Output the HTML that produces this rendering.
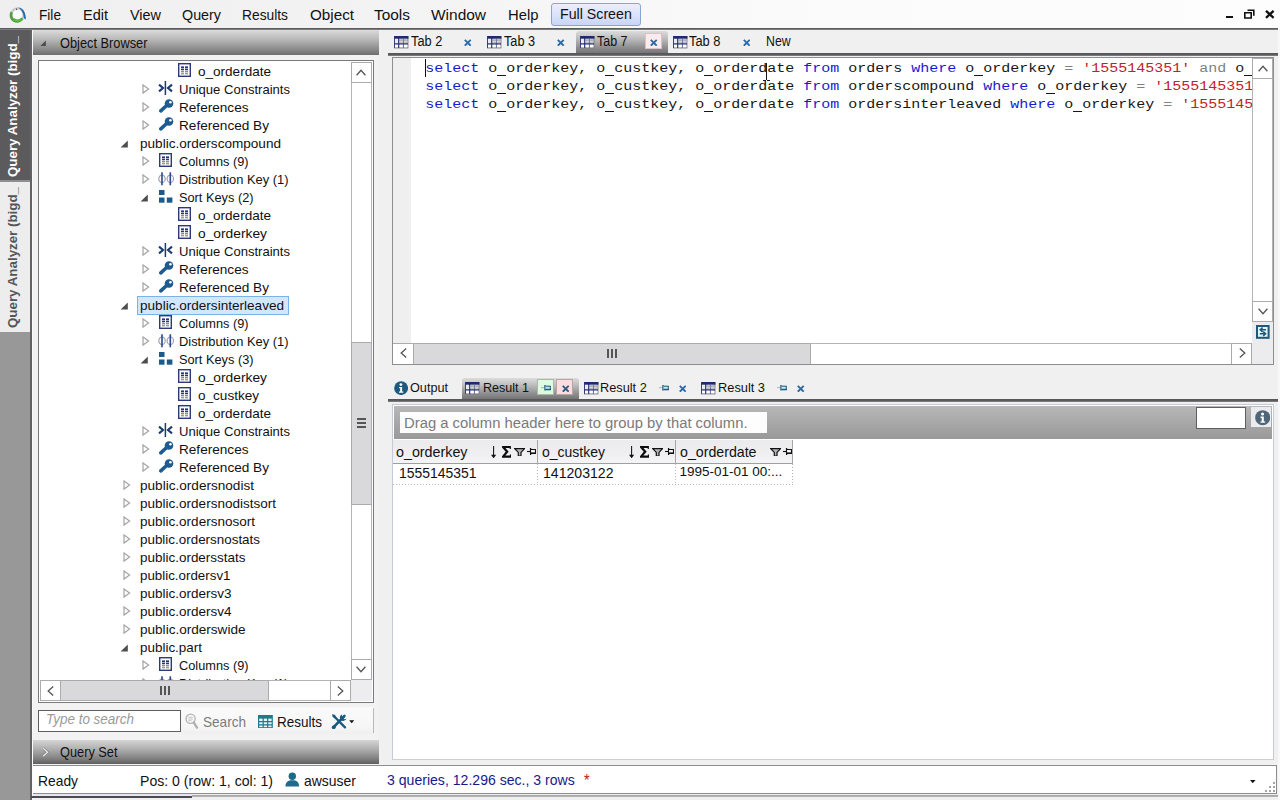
<!DOCTYPE html>
<html><head><meta charset="utf-8"><title>Query Analyzer</title>
<style>
html,body{margin:0;padding:0;}
body{width:1280px;height:800px;overflow:hidden;background:#f0f0f0;position:relative;font-family:'Liberation Sans',sans-serif;}
#r{position:absolute;left:0;top:0;width:1280px;height:800px;overflow:hidden;}
#r div,#r span,#r svg{position:absolute;display:block;box-sizing:border-box;}
#r .clip{overflow:hidden;}
</style></head><body><div id="r">
<div style="left:0px;top:0px;width:1280px;height:800px;background:#f0f0f0;"></div>
<div style="left:0px;top:0px;width:1280px;height:28px;background:linear-gradient(90deg,#f0eff0 0%,#f3f3f4 30%,#f9f9f9 55%,#fcfcfc 75%,#fdfdfd 100%);"></div>
<div style="left:0px;top:28px;width:1278px;height:1px;background:#5c5b5d;"></div>
<div style="left:0px;top:29px;width:1278px;height:1px;background:#7c7b7d;"></div>
<span style="left:38.60px;top:7.20px;font:15px/15px 'Liberation Sans',sans-serif;color:#111;white-space:pre;transform:scaleX(0.9102);transform-origin:0 0;">File</span>
<span style="left:83.00px;top:7.20px;font:15px/15px 'Liberation Sans',sans-serif;color:#111;white-space:pre;transform:scaleX(0.9672);transform-origin:0 0;">Edit</span>
<span style="left:129.50px;top:7.20px;font:15px/15px 'Liberation Sans',sans-serif;color:#111;white-space:pre;transform:scaleX(0.9615);transform-origin:0 0;">View</span>
<span style="left:182.00px;top:7.20px;font:15px/15px 'Liberation Sans',sans-serif;color:#111;white-space:pre;transform:scaleX(0.9548);transform-origin:0 0;">Query</span>
<span style="left:242.00px;top:7.20px;font:15px/15px 'Liberation Sans',sans-serif;color:#111;white-space:pre;transform:scaleX(0.9197);transform-origin:0 0;">Results</span>
<span style="left:309.50px;top:7.20px;font:15px/15px 'Liberation Sans',sans-serif;color:#111;white-space:pre;transform:scaleX(1.0149);transform-origin:0 0;">Object</span>
<span style="left:373.50px;top:7.20px;font:15px/15px 'Liberation Sans',sans-serif;color:#111;white-space:pre;transform:scaleX(1.0281);transform-origin:0 0;">Tools</span>
<span style="left:430.50px;top:7.20px;font:15px/15px 'Liberation Sans',sans-serif;color:#111;white-space:pre;transform:scaleX(1.0309);transform-origin:0 0;">Window</span>
<span style="left:507.50px;top:7.20px;font:15px/15px 'Liberation Sans',sans-serif;color:#111;white-space:pre;transform:scaleX(0.9887);transform-origin:0 0;">Help</span>
<div style="left:551px;top:3px;width:90px;height:23px;background:linear-gradient(#e9effc 0%,#dbe3fa 50%,#c9d5f7 100%);border:1px solid #86a6da;border-radius:3px;"></div>
<span style="left:560.30px;top:6.20px;font:15px/15px 'Liberation Sans',sans-serif;color:#111;white-space:pre;transform:scaleX(0.9464);transform-origin:0 0;">Full Screen</span>
<div style="left:1226px;top:16px;width:7px;height:2px;background:#111;"></div>
<svg style="left:1244px;top:9px;" width="11" height="10" viewBox="0 0 11 10"><path d="M3.5 1.2h6.3v5.6M0.8 3.8h6.4v5.2h-6.4z" fill="none" stroke="#111" stroke-width="1.6"/></svg>
<svg style="left:1265px;top:10px;" width="10" height="9" viewBox="0 0 10 9"><path d="M1 0.8l7.6 7M8.6 0.8l-7.6 7" stroke="#111" stroke-width="2.3" fill="none"/></svg>
<div style="left:0px;top:30px;width:30px;height:770px;background:#999899;"></div>
<div style="left:0px;top:30px;width:30px;height:150px;background:#5b5a5c;"></div>
<div style="left:0px;top:180px;width:30px;height:2px;background:#8f8e90;"></div>
<div style="left:0px;top:182px;width:30px;height:150px;background:#eeedee;"></div>
<div style="left:30px;top:30px;width:2px;height:770px;background:#636264;"></div>
<div style="left:32px;top:30px;width:1px;height:770px;background:#fbfbfd;"></div>
<span style="left:5.4px;top:177px;font:bold 13.5px/16px 'Liberation Sans',sans-serif;color:#fff;white-space:pre;transform-origin:0 0;transform:rotate(-90deg) scaleX(0.9875);">Query Analyzer (bigd_</span>
<span style="left:5.4px;top:328px;font:bold 13.5px/16px 'Liberation Sans',sans-serif;color:#555;white-space:pre;transform-origin:0 0;transform:rotate(-90deg) scaleX(0.9875);">Query Analyzer (bigd_</span>
<div style="left:33px;top:30px;width:346px;height:25px;background:linear-gradient(#dcdbdc 0%,#bcbbbc 35%,#8e8d8e 75%,#6f6e6f 100%);"></div>
<svg style="left:40.4px;top:40.2px;" width="7" height="7" viewBox="0 0 7 7"><path d="M5.8 0.6V5.9H0.5z" fill="#4a494b"/></svg>
<span style="left:59.50px;top:35.75px;font:14px/14px 'Liberation Sans',sans-serif;color:#111;white-space:pre;transform:scaleX(0.9143);transform-origin:0 0;">Object Browser</span>
<div style="left:33px;top:55px;width:346px;height:685px;background:#f3f2f3;"></div>
<div style="left:38px;top:60px;width:336px;height:643px;background:#fff;border:1px solid #7a7a7a;"></div>
<div class="clip" style="left:39px;top:61px;width:312px;height:619px;">
<svg style="left:139.3px;top:2.0999999999999996px;" width="13" height="14" viewBox="0 0 13 14"><rect x="0.7" y="0.7" width="11.6" height="12.6" fill="#fff" stroke="#2b3a7a" stroke-width="1.4"/><rect x="3" y="3.4" width="3" height="1.6" fill="#233478"/><rect x="7" y="3.4" width="3" height="1.6" fill="#233478"/><rect x="3" y="5.6" width="3" height="1.6" fill="#233478"/><rect x="7" y="5.6" width="3" height="1.6" fill="#233478"/><rect x="3" y="7.8" width="3" height="1.6" fill="#8a8a8a"/><rect x="7" y="7.8" width="3" height="1.6" fill="#8a8a8a"/><rect x="3" y="10" width="3" height="1.4" fill="#9a9a9a"/><rect x="7" y="10" width="3" height="1.4" fill="#9a9a9a"/></svg>
<span style="left:158.70px;top:3.70px;font:13px/13px 'Liberation Sans',sans-serif;color:#111;white-space:pre;transform:scaleX(1.0412);transform-origin:0 0;">o_orderdate</span>
<svg style="left:103.1px;top:23px;" width="8" height="10" viewBox="0 0 8 10"><path d="M1 0.9L6.6 5L1 9.1z" fill="#fff" stroke="#a3a3a3" stroke-width="1.2"/></svg>
<svg style="left:119.1px;top:19.8px;" width="15" height="14" viewBox="0 0 15 14"><path d="M7.4 0v14" stroke="#1f3a6e" stroke-width="1.5"/><path d="M1 3.6l4 3.4l-4 3.4M14 3.6l-4 3.4l4 3.4" fill="none" stroke="#1f3a6e" stroke-width="2.1"/></svg>
<span style="left:139.60px;top:21.70px;font:13px/13px 'Liberation Sans',sans-serif;color:#111;white-space:pre;transform:scaleX(1.0040);transform-origin:0 0;">Unique Constraints</span>
<svg style="left:103.1px;top:41px;" width="8" height="10" viewBox="0 0 8 10"><path d="M1 0.9L6.6 5L1 9.1z" fill="#fff" stroke="#a3a3a3" stroke-width="1.2"/></svg>
<svg style="left:119.8px;top:38.3px;" width="15" height="14" viewBox="0 0 15 14"><path d="M1.8 11.9L8.2 6" stroke="#1f5b8e" stroke-width="3.5" stroke-linecap="round"/><circle cx="10" cy="4.5" r="4.3" fill="#1f5b8e"/><circle cx="11.4" cy="3.3" r="1.3" fill="#fff"/></svg>
<span style="left:139.60px;top:39.70px;font:13px/13px 'Liberation Sans',sans-serif;color:#111;white-space:pre;transform:scaleX(1.0454);transform-origin:0 0;">References</span>
<svg style="left:103.1px;top:59px;" width="8" height="10" viewBox="0 0 8 10"><path d="M1 0.9L6.6 5L1 9.1z" fill="#fff" stroke="#a3a3a3" stroke-width="1.2"/></svg>
<svg style="left:119.8px;top:56.3px;" width="15" height="14" viewBox="0 0 15 14"><path d="M1.8 11.9L8.2 6" stroke="#1f5b8e" stroke-width="3.5" stroke-linecap="round"/><circle cx="10" cy="4.5" r="4.3" fill="#1f5b8e"/><circle cx="11.4" cy="3.3" r="1.3" fill="#fff"/></svg>
<span style="left:139.60px;top:57.70px;font:13px/13px 'Liberation Sans',sans-serif;color:#111;white-space:pre;transform:scaleX(1.0466);transform-origin:0 0;">Referenced By</span>
<svg style="left:81.4px;top:79px;" width="9" height="8" viewBox="0 0 9 8"><path d="M7.8 0.4V7.4H0.6z" fill="#4e4d4f"/></svg>
<span style="left:100.60px;top:75.70px;font:13px/13px 'Liberation Sans',sans-serif;color:#111;white-space:pre;transform:scaleX(1.0434);transform-origin:0 0;">public.orderscompound</span>
<svg style="left:103.1px;top:95px;" width="8" height="10" viewBox="0 0 8 10"><path d="M1 0.9L6.6 5L1 9.1z" fill="#fff" stroke="#a3a3a3" stroke-width="1.2"/></svg>
<svg style="left:120.2px;top:92.1px;" width="13" height="14" viewBox="0 0 13 14"><rect x="0.7" y="0.7" width="11.6" height="12.6" fill="#fff" stroke="#2b3a7a" stroke-width="1.4"/><rect x="3" y="3.4" width="3" height="1.6" fill="#233478"/><rect x="7" y="3.4" width="3" height="1.6" fill="#233478"/><rect x="3" y="5.6" width="3" height="1.6" fill="#233478"/><rect x="7" y="5.6" width="3" height="1.6" fill="#233478"/><rect x="3" y="7.8" width="3" height="1.6" fill="#8a8a8a"/><rect x="7" y="7.8" width="3" height="1.6" fill="#8a8a8a"/><rect x="3" y="10" width="3" height="1.4" fill="#9a9a9a"/><rect x="7" y="10" width="3" height="1.4" fill="#9a9a9a"/></svg>
<span style="left:139.60px;top:93.70px;font:13px/13px 'Liberation Sans',sans-serif;color:#111;white-space:pre;transform:scaleX(0.9817);transform-origin:0 0;">Columns (9)</span>
<svg style="left:103.1px;top:113px;" width="8" height="10" viewBox="0 0 8 10"><path d="M1 0.9L6.6 5L1 9.1z" fill="#fff" stroke="#a3a3a3" stroke-width="1.2"/></svg>
<svg style="left:119px;top:110.8px;" width="16" height="14" viewBox="0 0 16 14"><ellipse cx="4" cy="6.8" rx="3.2" ry="3.8" fill="none" stroke="#9aa3bb" stroke-width="1.2"/><ellipse cx="12.3" cy="6.8" rx="3.2" ry="3.8" fill="none" stroke="#9aa3bb" stroke-width="1.2"/><path d="M4 0.3v13M12.3 0.3v13" stroke="#2a4a8a" stroke-width="1.6"/></svg>
<span style="left:139.60px;top:111.70px;font:13px/13px 'Liberation Sans',sans-serif;color:#111;white-space:pre;transform:scaleX(0.9906);transform-origin:0 0;">Distribution Key (1)</span>
<svg style="left:100.8px;top:133px;" width="9" height="8" viewBox="0 0 9 8"><path d="M7.8 0.4V7.4H0.6z" fill="#4e4d4f"/></svg>
<svg style="left:120.2px;top:129px;" width="14" height="13" viewBox="0 0 14 13"><rect x="0" y="0" width="5.5" height="5" fill="#1a5a8c"/><rect x="0" y="7.5" width="5.5" height="5.2" fill="#1a5a8c"/><rect x="7.8" y="7.5" width="5.6" height="5.2" fill="#1a5a8c"/></svg>
<span style="left:139.60px;top:129.70px;font:13px/13px 'Liberation Sans',sans-serif;color:#111;white-space:pre;transform:scaleX(0.9821);transform-origin:0 0;">Sort Keys (2)</span>
<svg style="left:139.3px;top:146.1px;" width="13" height="14" viewBox="0 0 13 14"><rect x="0.7" y="0.7" width="11.6" height="12.6" fill="#fff" stroke="#2b3a7a" stroke-width="1.4"/><rect x="3" y="3.4" width="3" height="1.6" fill="#233478"/><rect x="7" y="3.4" width="3" height="1.6" fill="#233478"/><rect x="3" y="5.6" width="3" height="1.6" fill="#233478"/><rect x="7" y="5.6" width="3" height="1.6" fill="#233478"/><rect x="3" y="7.8" width="3" height="1.6" fill="#8a8a8a"/><rect x="7" y="7.8" width="3" height="1.6" fill="#8a8a8a"/><rect x="3" y="10" width="3" height="1.4" fill="#9a9a9a"/><rect x="7" y="10" width="3" height="1.4" fill="#9a9a9a"/></svg>
<span style="left:158.70px;top:147.70px;font:13px/13px 'Liberation Sans',sans-serif;color:#111;white-space:pre;transform:scaleX(1.0412);transform-origin:0 0;">o_orderdate</span>
<svg style="left:139.3px;top:164.1px;" width="13" height="14" viewBox="0 0 13 14"><rect x="0.7" y="0.7" width="11.6" height="12.6" fill="#fff" stroke="#2b3a7a" stroke-width="1.4"/><rect x="3" y="3.4" width="3" height="1.6" fill="#233478"/><rect x="7" y="3.4" width="3" height="1.6" fill="#233478"/><rect x="3" y="5.6" width="3" height="1.6" fill="#233478"/><rect x="7" y="5.6" width="3" height="1.6" fill="#233478"/><rect x="3" y="7.8" width="3" height="1.6" fill="#8a8a8a"/><rect x="7" y="7.8" width="3" height="1.6" fill="#8a8a8a"/><rect x="3" y="10" width="3" height="1.4" fill="#9a9a9a"/><rect x="7" y="10" width="3" height="1.4" fill="#9a9a9a"/></svg>
<span style="left:158.70px;top:165.70px;font:13px/13px 'Liberation Sans',sans-serif;color:#111;white-space:pre;transform:scaleX(1.0609);transform-origin:0 0;">o_orderkey</span>
<svg style="left:103.1px;top:185px;" width="8" height="10" viewBox="0 0 8 10"><path d="M1 0.9L6.6 5L1 9.1z" fill="#fff" stroke="#a3a3a3" stroke-width="1.2"/></svg>
<svg style="left:119.1px;top:181.8px;" width="15" height="14" viewBox="0 0 15 14"><path d="M7.4 0v14" stroke="#1f3a6e" stroke-width="1.5"/><path d="M1 3.6l4 3.4l-4 3.4M14 3.6l-4 3.4l4 3.4" fill="none" stroke="#1f3a6e" stroke-width="2.1"/></svg>
<span style="left:139.60px;top:183.70px;font:13px/13px 'Liberation Sans',sans-serif;color:#111;white-space:pre;transform:scaleX(1.0040);transform-origin:0 0;">Unique Constraints</span>
<svg style="left:103.1px;top:203px;" width="8" height="10" viewBox="0 0 8 10"><path d="M1 0.9L6.6 5L1 9.1z" fill="#fff" stroke="#a3a3a3" stroke-width="1.2"/></svg>
<svg style="left:119.8px;top:200.3px;" width="15" height="14" viewBox="0 0 15 14"><path d="M1.8 11.9L8.2 6" stroke="#1f5b8e" stroke-width="3.5" stroke-linecap="round"/><circle cx="10" cy="4.5" r="4.3" fill="#1f5b8e"/><circle cx="11.4" cy="3.3" r="1.3" fill="#fff"/></svg>
<span style="left:139.60px;top:201.70px;font:13px/13px 'Liberation Sans',sans-serif;color:#111;white-space:pre;transform:scaleX(1.0454);transform-origin:0 0;">References</span>
<svg style="left:103.1px;top:221px;" width="8" height="10" viewBox="0 0 8 10"><path d="M1 0.9L6.6 5L1 9.1z" fill="#fff" stroke="#a3a3a3" stroke-width="1.2"/></svg>
<svg style="left:119.8px;top:218.3px;" width="15" height="14" viewBox="0 0 15 14"><path d="M1.8 11.9L8.2 6" stroke="#1f5b8e" stroke-width="3.5" stroke-linecap="round"/><circle cx="10" cy="4.5" r="4.3" fill="#1f5b8e"/><circle cx="11.4" cy="3.3" r="1.3" fill="#fff"/></svg>
<span style="left:139.60px;top:219.70px;font:13px/13px 'Liberation Sans',sans-serif;color:#111;white-space:pre;transform:scaleX(1.0466);transform-origin:0 0;">Referenced By</span>
<div style="left:98px;top:235px;width:152px;height:19px;background:#d1e8fc;border:1px solid #7ab3ea;"></div>
<svg style="left:81.4px;top:241px;" width="9" height="8" viewBox="0 0 9 8"><path d="M7.8 0.4V7.4H0.6z" fill="#4e4d4f"/></svg>
<span style="left:100.60px;top:237.70px;font:13px/13px 'Liberation Sans',sans-serif;color:#111;white-space:pre;transform:scaleX(1.0433);transform-origin:0 0;">public.ordersinterleaved</span>
<svg style="left:103.1px;top:257px;" width="8" height="10" viewBox="0 0 8 10"><path d="M1 0.9L6.6 5L1 9.1z" fill="#fff" stroke="#a3a3a3" stroke-width="1.2"/></svg>
<svg style="left:120.2px;top:254.1px;" width="13" height="14" viewBox="0 0 13 14"><rect x="0.7" y="0.7" width="11.6" height="12.6" fill="#fff" stroke="#2b3a7a" stroke-width="1.4"/><rect x="3" y="3.4" width="3" height="1.6" fill="#233478"/><rect x="7" y="3.4" width="3" height="1.6" fill="#233478"/><rect x="3" y="5.6" width="3" height="1.6" fill="#233478"/><rect x="7" y="5.6" width="3" height="1.6" fill="#233478"/><rect x="3" y="7.8" width="3" height="1.6" fill="#8a8a8a"/><rect x="7" y="7.8" width="3" height="1.6" fill="#8a8a8a"/><rect x="3" y="10" width="3" height="1.4" fill="#9a9a9a"/><rect x="7" y="10" width="3" height="1.4" fill="#9a9a9a"/></svg>
<span style="left:139.60px;top:255.70px;font:13px/13px 'Liberation Sans',sans-serif;color:#111;white-space:pre;transform:scaleX(0.9817);transform-origin:0 0;">Columns (9)</span>
<svg style="left:103.1px;top:275px;" width="8" height="10" viewBox="0 0 8 10"><path d="M1 0.9L6.6 5L1 9.1z" fill="#fff" stroke="#a3a3a3" stroke-width="1.2"/></svg>
<svg style="left:119px;top:272.8px;" width="16" height="14" viewBox="0 0 16 14"><ellipse cx="4" cy="6.8" rx="3.2" ry="3.8" fill="none" stroke="#9aa3bb" stroke-width="1.2"/><ellipse cx="12.3" cy="6.8" rx="3.2" ry="3.8" fill="none" stroke="#9aa3bb" stroke-width="1.2"/><path d="M4 0.3v13M12.3 0.3v13" stroke="#2a4a8a" stroke-width="1.6"/></svg>
<span style="left:139.60px;top:273.70px;font:13px/13px 'Liberation Sans',sans-serif;color:#111;white-space:pre;transform:scaleX(0.9906);transform-origin:0 0;">Distribution Key (1)</span>
<svg style="left:100.8px;top:295px;" width="9" height="8" viewBox="0 0 9 8"><path d="M7.8 0.4V7.4H0.6z" fill="#4e4d4f"/></svg>
<svg style="left:120.2px;top:291px;" width="14" height="13" viewBox="0 0 14 13"><rect x="0" y="0" width="5.5" height="5" fill="#1a5a8c"/><rect x="0" y="7.5" width="5.5" height="5.2" fill="#1a5a8c"/><rect x="7.8" y="7.5" width="5.6" height="5.2" fill="#1a5a8c"/></svg>
<span style="left:139.60px;top:291.70px;font:13px/13px 'Liberation Sans',sans-serif;color:#111;white-space:pre;transform:scaleX(0.9821);transform-origin:0 0;">Sort Keys (3)</span>
<svg style="left:139.3px;top:308.1px;" width="13" height="14" viewBox="0 0 13 14"><rect x="0.7" y="0.7" width="11.6" height="12.6" fill="#fff" stroke="#2b3a7a" stroke-width="1.4"/><rect x="3" y="3.4" width="3" height="1.6" fill="#233478"/><rect x="7" y="3.4" width="3" height="1.6" fill="#233478"/><rect x="3" y="5.6" width="3" height="1.6" fill="#233478"/><rect x="7" y="5.6" width="3" height="1.6" fill="#233478"/><rect x="3" y="7.8" width="3" height="1.6" fill="#8a8a8a"/><rect x="7" y="7.8" width="3" height="1.6" fill="#8a8a8a"/><rect x="3" y="10" width="3" height="1.4" fill="#9a9a9a"/><rect x="7" y="10" width="3" height="1.4" fill="#9a9a9a"/></svg>
<span style="left:158.70px;top:309.70px;font:13px/13px 'Liberation Sans',sans-serif;color:#111;white-space:pre;transform:scaleX(1.0609);transform-origin:0 0;">o_orderkey</span>
<svg style="left:139.3px;top:326.1px;" width="13" height="14" viewBox="0 0 13 14"><rect x="0.7" y="0.7" width="11.6" height="12.6" fill="#fff" stroke="#2b3a7a" stroke-width="1.4"/><rect x="3" y="3.4" width="3" height="1.6" fill="#233478"/><rect x="7" y="3.4" width="3" height="1.6" fill="#233478"/><rect x="3" y="5.6" width="3" height="1.6" fill="#233478"/><rect x="7" y="5.6" width="3" height="1.6" fill="#233478"/><rect x="3" y="7.8" width="3" height="1.6" fill="#8a8a8a"/><rect x="7" y="7.8" width="3" height="1.6" fill="#8a8a8a"/><rect x="3" y="10" width="3" height="1.4" fill="#9a9a9a"/><rect x="7" y="10" width="3" height="1.4" fill="#9a9a9a"/></svg>
<span style="left:158.70px;top:327.70px;font:13px/13px 'Liberation Sans',sans-serif;color:#111;white-space:pre;transform:scaleX(1.0422);transform-origin:0 0;">o_custkey</span>
<svg style="left:139.3px;top:344.1px;" width="13" height="14" viewBox="0 0 13 14"><rect x="0.7" y="0.7" width="11.6" height="12.6" fill="#fff" stroke="#2b3a7a" stroke-width="1.4"/><rect x="3" y="3.4" width="3" height="1.6" fill="#233478"/><rect x="7" y="3.4" width="3" height="1.6" fill="#233478"/><rect x="3" y="5.6" width="3" height="1.6" fill="#233478"/><rect x="7" y="5.6" width="3" height="1.6" fill="#233478"/><rect x="3" y="7.8" width="3" height="1.6" fill="#8a8a8a"/><rect x="7" y="7.8" width="3" height="1.6" fill="#8a8a8a"/><rect x="3" y="10" width="3" height="1.4" fill="#9a9a9a"/><rect x="7" y="10" width="3" height="1.4" fill="#9a9a9a"/></svg>
<span style="left:158.70px;top:345.70px;font:13px/13px 'Liberation Sans',sans-serif;color:#111;white-space:pre;transform:scaleX(1.0412);transform-origin:0 0;">o_orderdate</span>
<svg style="left:103.1px;top:365px;" width="8" height="10" viewBox="0 0 8 10"><path d="M1 0.9L6.6 5L1 9.1z" fill="#fff" stroke="#a3a3a3" stroke-width="1.2"/></svg>
<svg style="left:119.1px;top:361.8px;" width="15" height="14" viewBox="0 0 15 14"><path d="M7.4 0v14" stroke="#1f3a6e" stroke-width="1.5"/><path d="M1 3.6l4 3.4l-4 3.4M14 3.6l-4 3.4l4 3.4" fill="none" stroke="#1f3a6e" stroke-width="2.1"/></svg>
<span style="left:139.60px;top:363.70px;font:13px/13px 'Liberation Sans',sans-serif;color:#111;white-space:pre;transform:scaleX(1.0040);transform-origin:0 0;">Unique Constraints</span>
<svg style="left:103.1px;top:383px;" width="8" height="10" viewBox="0 0 8 10"><path d="M1 0.9L6.6 5L1 9.1z" fill="#fff" stroke="#a3a3a3" stroke-width="1.2"/></svg>
<svg style="left:119.8px;top:380.3px;" width="15" height="14" viewBox="0 0 15 14"><path d="M1.8 11.9L8.2 6" stroke="#1f5b8e" stroke-width="3.5" stroke-linecap="round"/><circle cx="10" cy="4.5" r="4.3" fill="#1f5b8e"/><circle cx="11.4" cy="3.3" r="1.3" fill="#fff"/></svg>
<span style="left:139.60px;top:381.70px;font:13px/13px 'Liberation Sans',sans-serif;color:#111;white-space:pre;transform:scaleX(1.0454);transform-origin:0 0;">References</span>
<svg style="left:103.1px;top:401px;" width="8" height="10" viewBox="0 0 8 10"><path d="M1 0.9L6.6 5L1 9.1z" fill="#fff" stroke="#a3a3a3" stroke-width="1.2"/></svg>
<svg style="left:119.8px;top:398.3px;" width="15" height="14" viewBox="0 0 15 14"><path d="M1.8 11.9L8.2 6" stroke="#1f5b8e" stroke-width="3.5" stroke-linecap="round"/><circle cx="10" cy="4.5" r="4.3" fill="#1f5b8e"/><circle cx="11.4" cy="3.3" r="1.3" fill="#fff"/></svg>
<span style="left:139.60px;top:399.70px;font:13px/13px 'Liberation Sans',sans-serif;color:#111;white-space:pre;transform:scaleX(1.0466);transform-origin:0 0;">Referenced By</span>
<svg style="left:83.7px;top:419px;" width="8" height="10" viewBox="0 0 8 10"><path d="M1 0.9L6.6 5L1 9.1z" fill="#fff" stroke="#a3a3a3" stroke-width="1.2"/></svg>
<span style="left:100.60px;top:417.70px;font:13px/13px 'Liberation Sans',sans-serif;color:#111;white-space:pre;transform:scaleX(1.0448);transform-origin:0 0;">public.ordersnodist</span>
<svg style="left:83.7px;top:437px;" width="8" height="10" viewBox="0 0 8 10"><path d="M1 0.9L6.6 5L1 9.1z" fill="#fff" stroke="#a3a3a3" stroke-width="1.2"/></svg>
<span style="left:100.60px;top:435.70px;font:13px/13px 'Liberation Sans',sans-serif;color:#111;white-space:pre;transform:scaleX(1.0399);transform-origin:0 0;">public.ordersnodistsort</span>
<svg style="left:83.7px;top:455px;" width="8" height="10" viewBox="0 0 8 10"><path d="M1 0.9L6.6 5L1 9.1z" fill="#fff" stroke="#a3a3a3" stroke-width="1.2"/></svg>
<span style="left:100.60px;top:453.70px;font:13px/13px 'Liberation Sans',sans-serif;color:#111;white-space:pre;transform:scaleX(1.0402);transform-origin:0 0;">public.ordersnosort</span>
<svg style="left:83.7px;top:473px;" width="8" height="10" viewBox="0 0 8 10"><path d="M1 0.9L6.6 5L1 9.1z" fill="#fff" stroke="#a3a3a3" stroke-width="1.2"/></svg>
<span style="left:100.60px;top:471.70px;font:13px/13px 'Liberation Sans',sans-serif;color:#111;white-space:pre;transform:scaleX(1.0315);transform-origin:0 0;">public.ordersnostats</span>
<svg style="left:83.7px;top:491px;" width="8" height="10" viewBox="0 0 8 10"><path d="M1 0.9L6.6 5L1 9.1z" fill="#fff" stroke="#a3a3a3" stroke-width="1.2"/></svg>
<span style="left:100.60px;top:489.70px;font:13px/13px 'Liberation Sans',sans-serif;color:#111;white-space:pre;transform:scaleX(1.0355);transform-origin:0 0;">public.ordersstats</span>
<svg style="left:83.7px;top:509px;" width="8" height="10" viewBox="0 0 8 10"><path d="M1 0.9L6.6 5L1 9.1z" fill="#fff" stroke="#a3a3a3" stroke-width="1.2"/></svg>
<span style="left:100.60px;top:507.70px;font:13px/13px 'Liberation Sans',sans-serif;color:#111;white-space:pre;transform:scaleX(1.0266);transform-origin:0 0;">public.ordersv1</span>
<svg style="left:83.7px;top:527px;" width="8" height="10" viewBox="0 0 8 10"><path d="M1 0.9L6.6 5L1 9.1z" fill="#fff" stroke="#a3a3a3" stroke-width="1.2"/></svg>
<span style="left:100.60px;top:525.70px;font:13px/13px 'Liberation Sans',sans-serif;color:#111;white-space:pre;transform:scaleX(1.0379);transform-origin:0 0;">public.ordersv3</span>
<svg style="left:83.7px;top:545px;" width="8" height="10" viewBox="0 0 8 10"><path d="M1 0.9L6.6 5L1 9.1z" fill="#fff" stroke="#a3a3a3" stroke-width="1.2"/></svg>
<span style="left:100.60px;top:543.70px;font:13px/13px 'Liberation Sans',sans-serif;color:#111;white-space:pre;transform:scaleX(1.0379);transform-origin:0 0;">public.ordersv4</span>
<svg style="left:83.7px;top:563px;" width="8" height="10" viewBox="0 0 8 10"><path d="M1 0.9L6.6 5L1 9.1z" fill="#fff" stroke="#a3a3a3" stroke-width="1.2"/></svg>
<span style="left:100.60px;top:561.70px;font:13px/13px 'Liberation Sans',sans-serif;color:#111;white-space:pre;transform:scaleX(1.0429);transform-origin:0 0;">public.orderswide</span>
<svg style="left:81.4px;top:583px;" width="9" height="8" viewBox="0 0 9 8"><path d="M7.8 0.4V7.4H0.6z" fill="#4e4d4f"/></svg>
<span style="left:100.60px;top:579.70px;font:13px/13px 'Liberation Sans',sans-serif;color:#111;white-space:pre;transform:scaleX(1.0337);transform-origin:0 0;">public.part</span>
<svg style="left:103.1px;top:599px;" width="8" height="10" viewBox="0 0 8 10"><path d="M1 0.9L6.6 5L1 9.1z" fill="#fff" stroke="#a3a3a3" stroke-width="1.2"/></svg>
<svg style="left:120.2px;top:596.1px;" width="13" height="14" viewBox="0 0 13 14"><rect x="0.7" y="0.7" width="11.6" height="12.6" fill="#fff" stroke="#2b3a7a" stroke-width="1.4"/><rect x="3" y="3.4" width="3" height="1.6" fill="#233478"/><rect x="7" y="3.4" width="3" height="1.6" fill="#233478"/><rect x="3" y="5.6" width="3" height="1.6" fill="#233478"/><rect x="7" y="5.6" width="3" height="1.6" fill="#233478"/><rect x="3" y="7.8" width="3" height="1.6" fill="#8a8a8a"/><rect x="7" y="7.8" width="3" height="1.6" fill="#8a8a8a"/><rect x="3" y="10" width="3" height="1.4" fill="#9a9a9a"/><rect x="7" y="10" width="3" height="1.4" fill="#9a9a9a"/></svg>
<span style="left:139.60px;top:597.70px;font:13px/13px 'Liberation Sans',sans-serif;color:#111;white-space:pre;transform:scaleX(0.9817);transform-origin:0 0;">Columns (9)</span>
<svg style="left:103.1px;top:617px;" width="8" height="10" viewBox="0 0 8 10"><path d="M1 0.9L6.6 5L1 9.1z" fill="#fff" stroke="#a3a3a3" stroke-width="1.2"/></svg>
<svg style="left:119px;top:614.8px;" width="16" height="14" viewBox="0 0 16 14"><ellipse cx="4" cy="6.8" rx="3.2" ry="3.8" fill="none" stroke="#9aa3bb" stroke-width="1.2"/><ellipse cx="12.3" cy="6.8" rx="3.2" ry="3.8" fill="none" stroke="#9aa3bb" stroke-width="1.2"/><path d="M4 0.3v13M12.3 0.3v13" stroke="#2a4a8a" stroke-width="1.6"/></svg>
<span style="left:139.60px;top:615.70px;font:13px/13px 'Liberation Sans',sans-serif;color:#111;white-space:pre;transform:scaleX(0.9906);transform-origin:0 0;">Distribution Key (1)</span>
</div>
<div style="left:351px;top:62px;width:21px;height:618px;background:#fff;border-left:1px solid #b4b4b4;border-right:1px solid #b4b4b4;"></div>
<div style="left:351px;top:62px;width:21px;height:20.5px;background:#fff;border:1px solid #ababab;"></div>
<svg style="left:355.5px;top:69.4px;" width="10" height="7" viewBox="0 0 10 7"><path d="M0.6 6.2L5 1.2L9.4 6.2" fill="none" stroke="#555" stroke-width="1.3"/></svg>
<div style="left:351px;top:659px;width:21px;height:20.5px;background:#fff;border:1px solid #ababab;"></div>
<svg style="left:355.5px;top:665.6px;" width="10" height="7" viewBox="0 0 10 7"><path d="M0.6 0.8L5 5.8L9.4 0.8" fill="none" stroke="#555" stroke-width="1.3"/></svg>
<div style="left:351px;top:342px;width:21px;height:163px;background:#d9d9db;border:1px solid #ababab;"></div>
<div style="left:357px;top:418px;width:9px;height:2px;background:#555;"></div>
<div style="left:357px;top:422px;width:9px;height:2px;background:#555;"></div>
<div style="left:357px;top:426px;width:9px;height:2px;background:#555;"></div>
<div style="left:40px;top:680px;width:311px;height:21px;background:#fff;border-top:1px solid #b4b4b4;border-bottom:1px solid #b4b4b4;"></div>
<div style="left:40px;top:680px;width:21px;height:21px;background:#fff;border:1px solid #ababab;"></div>
<svg style="left:46.5px;top:685.5px;" width="7" height="10" viewBox="0 0 7 10"><path d="M6.2 0.6L1.2 5L6.2 9.4" fill="none" stroke="#555" stroke-width="1.3"/></svg>
<div style="left:330px;top:680px;width:21px;height:21px;background:#fff;border:1px solid #ababab;"></div>
<svg style="left:337px;top:685.5px;" width="7" height="10" viewBox="0 0 7 10"><path d="M0.8 0.6L5.8 5L0.8 9.4" fill="none" stroke="#555" stroke-width="1.3"/></svg>
<div style="left:60px;top:680px;width:209px;height:21px;background:#d9d9db;border:1px solid #ababab;"></div>
<div style="left:160px;top:686px;width:2px;height:9px;background:#555;"></div>
<div style="left:164px;top:686px;width:2px;height:9px;background:#555;"></div>
<div style="left:168px;top:686px;width:2px;height:9px;background:#555;"></div>
<div style="left:351px;top:680px;width:21px;height:21px;background:#ededf0;"></div>
<div style="left:181px;top:707px;width:193px;height:27px;background:linear-gradient(#fafafb 0%,#f7f7f8 70%,#efeff0 100%);"></div>
<div style="left:373px;top:708px;width:1px;height:25px;background:#b9b9bb;"></div>
<div style="left:38px;top:710px;width:143px;height:22px;background:#fff;border:1px solid #5f5f5f;"></div>
<span style="left:46.40px;top:712.03px;font:italic 14.5px/14.5px 'Liberation Sans',sans-serif;color:#9b9b9b;white-space:pre;transform:scaleX(0.9280);transform-origin:0 0;">Type to search</span>
<svg style="left:185px;top:713px;" width="14" height="17" viewBox="0 0 14 17"><circle cx="5.6" cy="5.8" r="4.6" fill="#f4f4f4" stroke="#b4b4b4" stroke-width="1.3"/><path d="M3.4 4.3h4.2M3.4 6h4.2M3.4 7.6h3" stroke="#c4c4c4" stroke-width="0.9"/><path d="M8.8 9.6l3.2 5" stroke="#b0b0b0" stroke-width="2.4" stroke-linecap="round"/></svg>
<span style="left:203.40px;top:713.80px;font:15px/15px 'Liberation Sans',sans-serif;color:#7b7b7b;white-space:pre;transform:scaleX(0.9047);transform-origin:0 0;">Search</span>
<svg style="left:257.5px;top:714.6px;" width="15" height="13.5" viewBox="0 0 15 13.5"><rect x="0.6" y="0.6" width="13.6" height="12.2" fill="#e8f3f5" stroke="#1e7a8c" stroke-width="1.2"/><rect x="0.6" y="0.6" width="13.6" height="3" fill="#1e7a8c"/><path d="M5.2 0.6v12.2M9.7 0.6v12.2M0.6 6.6h13.6M0.6 9.8h13.6" stroke="#1e7a8c" stroke-width="1.2"/></svg>
<span style="left:276.90px;top:713.80px;font:15px/15px 'Liberation Sans',sans-serif;color:#111;white-space:pre;transform:scaleX(0.8997);transform-origin:0 0;">Results</span>
<svg style="left:331px;top:713px;" width="17" height="17" viewBox="0 0 17 17"><path d="M2.2 14.6L13.4 3.0" stroke="#1a5a80" stroke-width="2.6" stroke-linecap="round"/><path d="M3 3.2L14 14.4" stroke="#1a5a80" stroke-width="2.3" stroke-linecap="round"/><path d="M10.8 1.4a3.4 3.4 0 1 0 4.6 4.4l-2.4 0.4l-1.6-1.8z" fill="#1a5a80"/><path d="M1 1.2l2.8 0.6l1.6 2.4l-1.4 1.2l-2.4-1.6z" fill="#1a5a80"/><circle cx="2.8" cy="14.2" r="1.9" fill="#1a5a80"/></svg>
<svg style="left:349px;top:719.6px;" width="6" height="4" viewBox="0 0 6 4"><path d="M0.2 0.2h5L2.7 3.2z" fill="#111"/></svg>
<div style="left:33px;top:740px;width:346px;height:24px;background:linear-gradient(#d6d5d6 0%,#b3b2b3 35%,#858485 75%,#5f5e60 100%);"></div>
<svg style="left:41.6px;top:746.6px;" width="8" height="10.4" viewBox="0 0 8 10.4"><path d="M1.2 1.2L5.6 5.2L1.2 9.2" fill="none" stroke="#7d7c7e" stroke-width="2.6"/><path d="M1.2 1.2L5.6 5.2L1.2 9.2" fill="none" stroke="#ececec" stroke-width="1.3"/></svg>
<span style="left:59.50px;top:744.75px;font:14px/14px 'Liberation Sans',sans-serif;color:#111;white-space:pre;transform:scaleX(0.9123);transform-origin:0 0;">Query Set</span>
<div style="left:33px;top:764px;width:1246px;height:1px;background:#f4f4f4;"></div>
<div style="left:33px;top:765px;width:1244px;height:29px;background:#fff;border:1px solid #8c8c8c;border-left:0;"></div>
<div style="left:33px;top:794px;width:159px;height:2.4px;background:#e6e6f6;"></div>
<div style="left:192px;top:794.6px;width:1086px;height:2.6px;background:linear-gradient(#a2a2a2,#b8b8b8);"></div>
<div style="left:31px;top:796.2px;width:161px;height:1.5px;background:#4c4b4d;"></div>
<div style="left:1278px;top:28px;width:2px;height:772px;background:#f8f8f9;"></div>
<span style="left:37.50px;top:773.10px;font:15px/15px 'Liberation Sans',sans-serif;color:#111;white-space:pre;transform:scaleX(0.9225);transform-origin:0 0;">Ready</span>
<span style="left:140.00px;top:773.10px;font:15px/15px 'Liberation Sans',sans-serif;color:#111;white-space:pre;transform:scaleX(0.9385);transform-origin:0 0;">Pos: 0 (row: 1, col: 1)</span>
<svg style="left:284.5px;top:772px;" width="15" height="15" viewBox="0 0 15 15"><circle cx="7.3" cy="4.2" r="3.7" fill="#1e6a8a"/><path d="M0.4 14.6c0.2-4.6 2.6-6.4 6.9-6.4s6.7 1.8 6.9 6.4z" fill="#1e6a8a"/></svg>
<span style="left:303.80px;top:773.10px;font:15px/15px 'Liberation Sans',sans-serif;color:#111;white-space:pre;transform:scaleX(0.9310);transform-origin:0 0;">awsuser</span>
<span style="left:387.30px;top:773.33px;font:14.5px/14.5px 'Liberation Sans',sans-serif;color:#18188e;white-space:pre;transform:scaleX(0.9708);transform-origin:0 0;">3 queries, 12.296 sec., 3 rows</span>
<span style="left:583.60px;top:772.66px;font:16px/16px 'Liberation Sans',sans-serif;color:#c01818;white-space:pre;transform:scaleX(0.8994);transform-origin:0 0;">*</span>
<svg style="left:1249.6px;top:780px;" width="6" height="3.4" viewBox="0 0 6 3.4"><path d="M0 0h5.6L2.8 3.2z" fill="#111"/></svg>
<div style="left:1273px;top:782px;width:2px;height:2px;background:#a4a4a4;"></div>
<div style="left:1269px;top:786px;width:2px;height:2px;background:#a4a4a4;"></div>
<div style="left:1273px;top:786px;width:2px;height:2px;background:#a4a4a4;"></div>
<div style="left:1265px;top:790px;width:2px;height:2px;background:#a4a4a4;"></div>
<div style="left:1269px;top:790px;width:2px;height:2px;background:#a4a4a4;"></div>
<div style="left:1273px;top:790px;width:2px;height:2px;background:#a4a4a4;"></div>
<div style="left:576px;top:31px;width:92px;height:22px;background:linear-gradient(#dddcdd 0%,#bdbcbd 35%,#8f8e8f 75%,#757476 100%);border-radius:3px 3px 0 0;"></div>
<svg style="left:393.5px;top:36px;" width="15" height="13" viewBox="0 0 15 13"><rect x="0.5" y="0.5" width="13.4" height="11.4" fill="#f4f4f6" stroke="#77777f" stroke-width="1"/><rect x="0" y="0" width="14.4" height="2.7" fill="#1f2a6b"/><rect x="1.2" y="3.3" width="2.8" height="3.8" fill="#e9e9ee"/><rect x="5.4" y="3.3" width="3.4" height="1.6" fill="#a9a9b0"/><rect x="10" y="3.3" width="3.4" height="1.6" fill="#a9a9b0"/><rect x="5.4" y="5.5" width="3.4" height="1.6" fill="#b9b9bf"/><rect x="10" y="5.5" width="3.4" height="1.6" fill="#b9b9bf"/><rect x="1.2" y="8.6" width="2.8" height="2.6" fill="#fff"/><rect x="5.4" y="8.6" width="3.4" height="2.6" fill="#fff"/><rect x="10" y="8.6" width="3.4" height="2.6" fill="#fff"/><path d="M4.7 0v12" stroke="#1f2a6b" stroke-width="1.1"/><path d="M9.4 2.7v9.3" stroke="#5a628f" stroke-width="0.9"/><path d="M0.4 0v12" stroke="#2a347a" stroke-width="0.9"/><path d="M0.4 7.9h13.6" stroke="#1f2a6b" stroke-width="1.2"/></svg>
<span style="left:410.60px;top:34.15px;font:14px/14px 'Liberation Sans',sans-serif;color:#111;white-space:pre;transform:scaleX(0.9139);transform-origin:0 0;">Tab 2</span>
<svg style="left:464px;top:38.8px;" width="7.5" height="7.5" viewBox="0 0 7.5 7.5"><path d="M0.8 0.8L6.7 6.7M6.7 0.8L0.8 6.7" stroke="#2a6aa8" stroke-width="1.9" fill="none"/></svg>
<svg style="left:486.5px;top:36px;" width="15" height="13" viewBox="0 0 15 13"><rect x="0.5" y="0.5" width="13.4" height="11.4" fill="#f4f4f6" stroke="#77777f" stroke-width="1"/><rect x="0" y="0" width="14.4" height="2.7" fill="#1f2a6b"/><rect x="1.2" y="3.3" width="2.8" height="3.8" fill="#e9e9ee"/><rect x="5.4" y="3.3" width="3.4" height="1.6" fill="#a9a9b0"/><rect x="10" y="3.3" width="3.4" height="1.6" fill="#a9a9b0"/><rect x="5.4" y="5.5" width="3.4" height="1.6" fill="#b9b9bf"/><rect x="10" y="5.5" width="3.4" height="1.6" fill="#b9b9bf"/><rect x="1.2" y="8.6" width="2.8" height="2.6" fill="#fff"/><rect x="5.4" y="8.6" width="3.4" height="2.6" fill="#fff"/><rect x="10" y="8.6" width="3.4" height="2.6" fill="#fff"/><path d="M4.7 0v12" stroke="#1f2a6b" stroke-width="1.1"/><path d="M9.4 2.7v9.3" stroke="#5a628f" stroke-width="0.9"/><path d="M0.4 0v12" stroke="#2a347a" stroke-width="0.9"/><path d="M0.4 7.9h13.6" stroke="#1f2a6b" stroke-width="1.2"/></svg>
<span style="left:503.80px;top:34.15px;font:14px/14px 'Liberation Sans',sans-serif;color:#111;white-space:pre;transform:scaleX(0.9052);transform-origin:0 0;">Tab 3</span>
<svg style="left:557px;top:38.8px;" width="7.5" height="7.5" viewBox="0 0 7.5 7.5"><path d="M0.8 0.8L6.7 6.7M6.7 0.8L0.8 6.7" stroke="#2a6aa8" stroke-width="1.9" fill="none"/></svg>
<svg style="left:579.7px;top:36px;" width="15" height="13" viewBox="0 0 15 13"><rect x="0.5" y="0.5" width="13.4" height="11.4" fill="#f4f4f6" stroke="#77777f" stroke-width="1"/><rect x="0" y="0" width="14.4" height="2.7" fill="#1f2a6b"/><rect x="1.2" y="3.3" width="2.8" height="3.8" fill="#e9e9ee"/><rect x="5.4" y="3.3" width="3.4" height="1.6" fill="#a9a9b0"/><rect x="10" y="3.3" width="3.4" height="1.6" fill="#a9a9b0"/><rect x="5.4" y="5.5" width="3.4" height="1.6" fill="#b9b9bf"/><rect x="10" y="5.5" width="3.4" height="1.6" fill="#b9b9bf"/><rect x="1.2" y="8.6" width="2.8" height="2.6" fill="#fff"/><rect x="5.4" y="8.6" width="3.4" height="2.6" fill="#fff"/><rect x="10" y="8.6" width="3.4" height="2.6" fill="#fff"/><path d="M4.7 0v12" stroke="#1f2a6b" stroke-width="1.1"/><path d="M9.4 2.7v9.3" stroke="#5a628f" stroke-width="0.9"/><path d="M0.4 0v12" stroke="#2a347a" stroke-width="0.9"/><path d="M0.4 7.9h13.6" stroke="#1f2a6b" stroke-width="1.2"/></svg>
<span style="left:597.00px;top:34.15px;font:14px/14px 'Liberation Sans',sans-serif;color:#111;white-space:pre;transform:scaleX(0.8906);transform-origin:0 0;">Tab 7</span>
<svg style="left:672.5px;top:36px;" width="15" height="13" viewBox="0 0 15 13"><rect x="0.5" y="0.5" width="13.4" height="11.4" fill="#f4f4f6" stroke="#77777f" stroke-width="1"/><rect x="0" y="0" width="14.4" height="2.7" fill="#1f2a6b"/><rect x="1.2" y="3.3" width="2.8" height="3.8" fill="#e9e9ee"/><rect x="5.4" y="3.3" width="3.4" height="1.6" fill="#a9a9b0"/><rect x="10" y="3.3" width="3.4" height="1.6" fill="#a9a9b0"/><rect x="5.4" y="5.5" width="3.4" height="1.6" fill="#b9b9bf"/><rect x="10" y="5.5" width="3.4" height="1.6" fill="#b9b9bf"/><rect x="1.2" y="8.6" width="2.8" height="2.6" fill="#fff"/><rect x="5.4" y="8.6" width="3.4" height="2.6" fill="#fff"/><rect x="10" y="8.6" width="3.4" height="2.6" fill="#fff"/><path d="M4.7 0v12" stroke="#1f2a6b" stroke-width="1.1"/><path d="M9.4 2.7v9.3" stroke="#5a628f" stroke-width="0.9"/><path d="M0.4 0v12" stroke="#2a347a" stroke-width="0.9"/><path d="M0.4 7.9h13.6" stroke="#1f2a6b" stroke-width="1.2"/></svg>
<span style="left:689.40px;top:34.15px;font:14px/14px 'Liberation Sans',sans-serif;color:#111;white-space:pre;transform:scaleX(0.9198);transform-origin:0 0;">Tab 8</span>
<svg style="left:742.8px;top:38.8px;" width="7.5" height="7.5" viewBox="0 0 7.5 7.5"><path d="M0.8 0.8L6.7 6.7M6.7 0.8L0.8 6.7" stroke="#2a6aa8" stroke-width="1.9" fill="none"/></svg>
<div style="left:645px;top:33px;width:17px;height:16px;background:#fcebed;border:1px solid #dcc2c6;"></div>
<svg style="left:650.2px;top:38.8px;" width="7.5" height="7.5" viewBox="0 0 7.5 7.5"><path d="M0.8 0.8L6.7 6.7M6.7 0.8L0.8 6.7" stroke="#2a6aa8" stroke-width="1.9" fill="none"/></svg>
<span style="left:765.70px;top:34.15px;font:14px/14px 'Liberation Sans',sans-serif;color:#111;white-space:pre;transform:scaleX(0.8784);transform-origin:0 0;">New</span>
<div style="left:388px;top:53px;width:890px;height:3px;background:linear-gradient(#555456 0%,#5e5d5f 60%,#8b8a8c 100%);"></div>
<div style="left:392px;top:57px;width:882px;height:308px;background:#fff;border:1px solid #8e8e8e;"></div>
<div style="left:393px;top:58px;width:18px;height:286px;background:#efefef;"></div>
<div class="clip" style="left:411px;top:58px;width:841px;height:286px;">
<span style="left:14.30px;top:2.50px;font:15px/15px 'Liberation Mono',monospace;color:#1818d4;white-space:pre;transform:scaleY(0.82);transform-origin:0 11.5px;">select</span>
<span style="left:68.30px;top:2.50px;font:15px/15px 'Liberation Mono',monospace;color:#161616;white-space:pre;transform:scaleY(0.82);transform-origin:0 11.5px;"> o orderkey, o custkey, o orderdate </span>
<div style="left:86.3px;top:17.1px;width:9.2px;height:1.3px;background:#161616;"></div>
<div style="left:194.3px;top:17.1px;width:9.2px;height:1.3px;background:#161616;"></div>
<div style="left:293.3px;top:17.1px;width:9.2px;height:1.3px;background:#161616;"></div>
<span style="left:392.30px;top:2.50px;font:15px/15px 'Liberation Mono',monospace;color:#1818d4;white-space:pre;transform:scaleY(0.82);transform-origin:0 11.5px;">from</span>
<span style="left:428.30px;top:2.50px;font:15px/15px 'Liberation Mono',monospace;color:#161616;white-space:pre;transform:scaleY(0.82);transform-origin:0 11.5px;"> orders </span>
<span style="left:500.30px;top:2.50px;font:15px/15px 'Liberation Mono',monospace;color:#1818d4;white-space:pre;transform:scaleY(0.82);transform-origin:0 11.5px;">where</span>
<span style="left:545.30px;top:2.50px;font:15px/15px 'Liberation Mono',monospace;color:#161616;white-space:pre;transform:scaleY(0.82);transform-origin:0 11.5px;"> o orderkey </span>
<div style="left:563.3px;top:17.1px;width:9.2px;height:1.3px;background:#161616;"></div>
<span style="left:653.30px;top:2.50px;font:15px/15px 'Liberation Mono',monospace;color:#808080;white-space:pre;transform:scaleY(0.82);transform-origin:0 11.5px;">= </span>
<span style="left:671.30px;top:2.50px;font:15px/15px 'Liberation Mono',monospace;color:#c4202c;white-space:pre;transform:scaleY(0.82);transform-origin:0 11.5px;">'1555145351'</span>
<span style="left:779.30px;top:2.50px;font:15px/15px 'Liberation Mono',monospace;color:#808080;white-space:pre;transform:scaleY(0.82);transform-origin:0 11.5px;"> and </span>
<span style="left:824.30px;top:2.50px;font:15px/15px 'Liberation Mono',monospace;color:#161616;white-space:pre;transform:scaleY(0.82);transform-origin:0 11.5px;">o orderdate</span>
<div style="left:833.3px;top:17.1px;width:9.2px;height:1.3px;background:#161616;"></div>
<span style="left:14.30px;top:20.50px;font:15px/15px 'Liberation Mono',monospace;color:#1818d4;white-space:pre;transform:scaleY(0.82);transform-origin:0 11.5px;">select</span>
<span style="left:68.30px;top:20.50px;font:15px/15px 'Liberation Mono',monospace;color:#161616;white-space:pre;transform:scaleY(0.82);transform-origin:0 11.5px;"> o orderkey, o custkey, o orderdate </span>
<div style="left:86.3px;top:35.1px;width:9.2px;height:1.3px;background:#161616;"></div>
<div style="left:194.3px;top:35.1px;width:9.2px;height:1.3px;background:#161616;"></div>
<div style="left:293.3px;top:35.1px;width:9.2px;height:1.3px;background:#161616;"></div>
<span style="left:392.30px;top:20.50px;font:15px/15px 'Liberation Mono',monospace;color:#1818d4;white-space:pre;transform:scaleY(0.82);transform-origin:0 11.5px;">from</span>
<span style="left:428.30px;top:20.50px;font:15px/15px 'Liberation Mono',monospace;color:#161616;white-space:pre;transform:scaleY(0.82);transform-origin:0 11.5px;"> orderscompound </span>
<span style="left:572.30px;top:20.50px;font:15px/15px 'Liberation Mono',monospace;color:#1818d4;white-space:pre;transform:scaleY(0.82);transform-origin:0 11.5px;">where</span>
<span style="left:617.30px;top:20.50px;font:15px/15px 'Liberation Mono',monospace;color:#161616;white-space:pre;transform:scaleY(0.82);transform-origin:0 11.5px;"> o orderkey </span>
<div style="left:635.3px;top:35.1px;width:9.2px;height:1.3px;background:#161616;"></div>
<span style="left:725.30px;top:20.50px;font:15px/15px 'Liberation Mono',monospace;color:#808080;white-space:pre;transform:scaleY(0.82);transform-origin:0 11.5px;">= </span>
<span style="left:743.30px;top:20.50px;font:15px/15px 'Liberation Mono',monospace;color:#c4202c;white-space:pre;transform:scaleY(0.82);transform-origin:0 11.5px;">'1555145351'</span>
<span style="left:851.30px;top:20.50px;font:15px/15px 'Liberation Mono',monospace;color:#808080;white-space:pre;transform:scaleY(0.82);transform-origin:0 11.5px;"> and </span>
<span style="left:14.30px;top:38.50px;font:15px/15px 'Liberation Mono',monospace;color:#1818d4;white-space:pre;transform:scaleY(0.82);transform-origin:0 11.5px;">select</span>
<span style="left:68.30px;top:38.50px;font:15px/15px 'Liberation Mono',monospace;color:#161616;white-space:pre;transform:scaleY(0.82);transform-origin:0 11.5px;"> o orderkey, o custkey, o orderdate </span>
<div style="left:86.3px;top:53.1px;width:9.2px;height:1.3px;background:#161616;"></div>
<div style="left:194.3px;top:53.1px;width:9.2px;height:1.3px;background:#161616;"></div>
<div style="left:293.3px;top:53.1px;width:9.2px;height:1.3px;background:#161616;"></div>
<span style="left:392.30px;top:38.50px;font:15px/15px 'Liberation Mono',monospace;color:#1818d4;white-space:pre;transform:scaleY(0.82);transform-origin:0 11.5px;">from</span>
<span style="left:428.30px;top:38.50px;font:15px/15px 'Liberation Mono',monospace;color:#161616;white-space:pre;transform:scaleY(0.82);transform-origin:0 11.5px;"> ordersinterleaved </span>
<span style="left:599.30px;top:38.50px;font:15px/15px 'Liberation Mono',monospace;color:#1818d4;white-space:pre;transform:scaleY(0.82);transform-origin:0 11.5px;">where</span>
<span style="left:644.30px;top:38.50px;font:15px/15px 'Liberation Mono',monospace;color:#161616;white-space:pre;transform:scaleY(0.82);transform-origin:0 11.5px;"> o orderkey </span>
<div style="left:662.3px;top:53.1px;width:9.2px;height:1.3px;background:#161616;"></div>
<span style="left:752.30px;top:38.50px;font:15px/15px 'Liberation Mono',monospace;color:#808080;white-space:pre;transform:scaleY(0.82);transform-origin:0 11.5px;">= </span>
<span style="left:770.30px;top:38.50px;font:15px/15px 'Liberation Mono',monospace;color:#c4202c;white-space:pre;transform:scaleY(0.82);transform-origin:0 11.5px;">'1555145351'</span>
<span style="left:878.30px;top:38.50px;font:15px/15px 'Liberation Mono',monospace;color:#808080;white-space:pre;transform:scaleY(0.82);transform-origin:0 11.5px;"> and </span>
</div>
<div style="left:425.2px;top:59px;width:1.3px;height:17.6px;background:#111;"></div>
<div style="left:765.9px;top:63px;width:1.2px;height:17px;background:#1a1a1a;"></div>
<div style="left:763px;top:79.6px;width:2.9px;height:1.1px;background:#1a1a1a;"></div>
<div style="left:767.1px;top:79.6px;width:2.9px;height:1.1px;background:#1a1a1a;"></div>
<div style="left:1252px;top:58px;width:21px;height:306px;background:#ececee;"></div>
<div style="left:1252px;top:58px;width:21px;height:264px;background:#fff;border-left:1px solid #b4b4b4;border-right:1px solid #b4b4b4;"></div>
<div style="left:1252px;top:58px;width:21px;height:21px;background:#fff;border:1px solid #ababab;"></div>
<svg style="left:1257.5px;top:65.2px;" width="10" height="7" viewBox="0 0 10 7"><path d="M0.6 6.2L5 1.2L9.4 6.2" fill="none" stroke="#555" stroke-width="1.3"/></svg>
<div style="left:1252px;top:301px;width:21px;height:20.5px;background:#fff;border:1px solid #ababab;"></div>
<svg style="left:1257.5px;top:308.2px;" width="10" height="7" viewBox="0 0 10 7"><path d="M0.6 0.8L5 5.8L9.4 0.8" fill="none" stroke="#555" stroke-width="1.3"/></svg>
<svg style="left:1256px;top:325px;" width="14" height="14" viewBox="0 0 14 14"><rect x="1" y="1" width="11.6" height="11.8" fill="#e4f4f8" stroke="#1c5a78" stroke-width="2"/><path d="M10 4.8H4.4M6.6 2.6L4.2 4.8L6.6 7" fill="none" stroke="#1c5a78" stroke-width="1.5"/><path d="M3.8 8.8H9.4M7.2 6.6L9.6 8.8L7.2 11" fill="none" stroke="#1c5a78" stroke-width="1.5"/></svg>
<div style="left:393px;top:343px;width:859px;height:21px;background:#fff;border-top:1px solid #b4b4b4;"></div>
<div style="left:393px;top:343px;width:21px;height:21px;background:#fff;border:1px solid #ababab;border-left:0;border-bottom:0;"></div>
<svg style="left:399.5px;top:348.4px;" width="7" height="10" viewBox="0 0 7 10"><path d="M6.2 0.6L1.2 5L6.2 9.4" fill="none" stroke="#555" stroke-width="1.3"/></svg>
<div style="left:1231px;top:343px;width:21px;height:21px;background:#fff;border:1px solid #ababab;border-bottom:0;"></div>
<svg style="left:1238.5px;top:348.4px;" width="7" height="10" viewBox="0 0 7 10"><path d="M0.8 0.6L5.8 5L0.8 9.4" fill="none" stroke="#555" stroke-width="1.3"/></svg>
<div style="left:413px;top:343px;width:398px;height:21px;background:#d9d9db;border:1px solid #ababab;border-bottom:0;"></div>
<div style="left:607px;top:349px;width:2px;height:9px;background:#555;"></div>
<div style="left:611px;top:349px;width:2px;height:9px;background:#555;"></div>
<div style="left:615px;top:349px;width:2px;height:9px;background:#555;"></div>
<div style="left:462px;top:378.2px;width:117px;height:20.8px;background:linear-gradient(#dddcdd 0%,#bdbcbd 35%,#8f8e8f 75%,#757476 100%);border-radius:3px 3px 0 0;"></div>
<svg style="left:393.8px;top:380.8px;" width="14.2" height="14.2" viewBox="0 0 14.5 14.5"><circle cx="7.25" cy="7.25" r="7.1" fill="#1c5a80"/><circle cx="7.1" cy="3.7" r="1.45" fill="#fff"/><path d="M5.2 6.2h3.1v4.6h1.2v1.3H5.1v-1.3h1.2V7.5H5.2z" fill="#fff"/></svg>
<span style="left:410.30px;top:380.77px;font:13.5px/13.5px 'Liberation Sans',sans-serif;color:#111;white-space:pre;transform:scaleX(0.9377);transform-origin:0 0;">Output</span>
<svg style="left:465.3px;top:381.6px;" width="15" height="13" viewBox="0 0 15 13"><rect x="0.5" y="0.5" width="13.4" height="11.4" fill="#f4f4f6" stroke="#77777f" stroke-width="1"/><rect x="0" y="0" width="14.4" height="2.7" fill="#1f2a6b"/><rect x="1.2" y="3.3" width="2.8" height="3.8" fill="#e9e9ee"/><rect x="5.4" y="3.3" width="3.4" height="1.6" fill="#a9a9b0"/><rect x="10" y="3.3" width="3.4" height="1.6" fill="#a9a9b0"/><rect x="5.4" y="5.5" width="3.4" height="1.6" fill="#b9b9bf"/><rect x="10" y="5.5" width="3.4" height="1.6" fill="#b9b9bf"/><rect x="1.2" y="8.6" width="2.8" height="2.6" fill="#fff"/><rect x="5.4" y="8.6" width="3.4" height="2.6" fill="#fff"/><rect x="10" y="8.6" width="3.4" height="2.6" fill="#fff"/><path d="M4.7 0v12" stroke="#1f2a6b" stroke-width="1.1"/><path d="M9.4 2.7v9.3" stroke="#5a628f" stroke-width="0.9"/><path d="M0.4 0v12" stroke="#2a347a" stroke-width="0.9"/><path d="M0.4 7.9h13.6" stroke="#1f2a6b" stroke-width="1.2"/></svg>
<span style="left:482.50px;top:380.77px;font:13.5px/13.5px 'Liberation Sans',sans-serif;color:#111;white-space:pre;transform:scaleX(0.9288);transform-origin:0 0;">Result 1</span>
<div style="left:537.4px;top:379.2px;width:16.2px;height:16px;background:#dffbdf;border:1px solid #a9b9a9;"></div>
<svg style="left:541.2px;top:385.2px;" width="10" height="6" viewBox="0 0 10 6"><path d="M0 2.7h3.4" stroke="#9fb7c4" stroke-width="1"/><path d="M4 0v5.5" stroke="#1f5878" stroke-width="1.4"/><rect x="4.6" y="1.1" width="4.6" height="3.3" fill="#bfeaf5"/><path d="M4.6 1.2h4.8M9.3 1v3.8M4.6 4.6h5.2" fill="none" stroke="#1f5878" stroke-width="1"/><path d="M4.6 4.5h5.1" stroke="#1f5878" stroke-width="1.4"/></svg>
<div style="left:556.4px;top:379.2px;width:16.2px;height:16px;background:#fbdde0;border:1px solid #b9a4a8;"></div>
<svg style="left:561.9px;top:384.6px;" width="7.5" height="7.5" viewBox="0 0 7.5 7.5"><path d="M0.8 0.8L6.7 6.7M6.7 0.8L0.8 6.7" stroke="#2a5a80" stroke-width="1.9" fill="none"/></svg>
<svg style="left:583.7px;top:381.6px;" width="15" height="13" viewBox="0 0 15 13"><rect x="0.5" y="0.5" width="13.4" height="11.4" fill="#f4f4f6" stroke="#77777f" stroke-width="1"/><rect x="0" y="0" width="14.4" height="2.7" fill="#1f2a6b"/><rect x="1.2" y="3.3" width="2.8" height="3.8" fill="#e9e9ee"/><rect x="5.4" y="3.3" width="3.4" height="1.6" fill="#a9a9b0"/><rect x="10" y="3.3" width="3.4" height="1.6" fill="#a9a9b0"/><rect x="5.4" y="5.5" width="3.4" height="1.6" fill="#b9b9bf"/><rect x="10" y="5.5" width="3.4" height="1.6" fill="#b9b9bf"/><rect x="1.2" y="8.6" width="2.8" height="2.6" fill="#fff"/><rect x="5.4" y="8.6" width="3.4" height="2.6" fill="#fff"/><rect x="10" y="8.6" width="3.4" height="2.6" fill="#fff"/><path d="M4.7 0v12" stroke="#1f2a6b" stroke-width="1.1"/><path d="M9.4 2.7v9.3" stroke="#5a628f" stroke-width="0.9"/><path d="M0.4 0v12" stroke="#2a347a" stroke-width="0.9"/><path d="M0.4 7.9h13.6" stroke="#1f2a6b" stroke-width="1.2"/></svg>
<span style="left:600.00px;top:380.77px;font:13.5px/13.5px 'Liberation Sans',sans-serif;color:#111;white-space:pre;transform:scaleX(0.9450);transform-origin:0 0;">Result 2</span>
<svg style="left:658.8px;top:385.2px;" width="10" height="6" viewBox="0 0 10 6"><path d="M0 2.7h3.4" stroke="#9fb7c4" stroke-width="1"/><path d="M4 0v5.5" stroke="#1f5878" stroke-width="1.4"/><rect x="4.6" y="1.1" width="4.6" height="3.3" fill="#bfeaf5"/><path d="M4.6 1.2h4.8M9.3 1v3.8M4.6 4.6h5.2" fill="none" stroke="#1f5878" stroke-width="1"/><path d="M4.6 4.5h5.1" stroke="#1f5878" stroke-width="1.4"/></svg>
<svg style="left:678.8px;top:384.6px;" width="7.5" height="7.5" viewBox="0 0 7.5 7.5"><path d="M0.8 0.8L6.7 6.7M6.7 0.8L0.8 6.7" stroke="#2a6aa8" stroke-width="1.9" fill="none"/></svg>
<svg style="left:701.3px;top:381.6px;" width="15" height="13" viewBox="0 0 15 13"><rect x="0.5" y="0.5" width="13.4" height="11.4" fill="#f4f4f6" stroke="#77777f" stroke-width="1"/><rect x="0" y="0" width="14.4" height="2.7" fill="#1f2a6b"/><rect x="1.2" y="3.3" width="2.8" height="3.8" fill="#e9e9ee"/><rect x="5.4" y="3.3" width="3.4" height="1.6" fill="#a9a9b0"/><rect x="10" y="3.3" width="3.4" height="1.6" fill="#a9a9b0"/><rect x="5.4" y="5.5" width="3.4" height="1.6" fill="#b9b9bf"/><rect x="10" y="5.5" width="3.4" height="1.6" fill="#b9b9bf"/><rect x="1.2" y="8.6" width="2.8" height="2.6" fill="#fff"/><rect x="5.4" y="8.6" width="3.4" height="2.6" fill="#fff"/><rect x="10" y="8.6" width="3.4" height="2.6" fill="#fff"/><path d="M4.7 0v12" stroke="#1f2a6b" stroke-width="1.1"/><path d="M9.4 2.7v9.3" stroke="#5a628f" stroke-width="0.9"/><path d="M0.4 0v12" stroke="#2a347a" stroke-width="0.9"/><path d="M0.4 7.9h13.6" stroke="#1f2a6b" stroke-width="1.2"/></svg>
<span style="left:718.00px;top:380.77px;font:13.5px/13.5px 'Liberation Sans',sans-serif;color:#111;white-space:pre;transform:scaleX(0.9490);transform-origin:0 0;">Result 3</span>
<svg style="left:777px;top:385.2px;" width="10" height="6" viewBox="0 0 10 6"><path d="M0 2.7h3.4" stroke="#9fb7c4" stroke-width="1"/><path d="M4 0v5.5" stroke="#1f5878" stroke-width="1.4"/><rect x="4.6" y="1.1" width="4.6" height="3.3" fill="#bfeaf5"/><path d="M4.6 1.2h4.8M9.3 1v3.8M4.6 4.6h5.2" fill="none" stroke="#1f5878" stroke-width="1"/><path d="M4.6 4.5h5.1" stroke="#1f5878" stroke-width="1.4"/></svg>
<svg style="left:797.3px;top:384.6px;" width="7.5" height="7.5" viewBox="0 0 7.5 7.5"><path d="M0.8 0.8L6.7 6.7M6.7 0.8L0.8 6.7" stroke="#2a6aa8" stroke-width="1.9" fill="none"/></svg>
<div style="left:388px;top:399px;width:890px;height:3px;background:linear-gradient(#555456 0%,#5e5d5f 60%,#8b8a8c 100%);"></div>
<div style="left:392px;top:404px;width:882px;height:356px;background:#fff;border:1px solid #c3ccd6;border-bottom-color:#cfcfcf;"></div>
<div style="left:394px;top:406px;width:878px;height:33px;background:linear-gradient(#b9b8b9 0%,#a9a8a9 50%,#9a999a 100%);"></div>
<div style="left:399.6px;top:412px;width:367.6px;height:21px;background:#fdfdfd;"></div>
<span style="left:403.50px;top:415.95px;font:14px/14px 'Liberation Sans',sans-serif;color:#7a7a7a;white-space:pre;transform:scaleX(1.0585);transform-origin:0 0;">Drag a column header here to group by that column.</span>
<div style="left:1196px;top:407px;width:50px;height:22px;background:#fff;border:1px solid #5f5f5f;"></div>
<div style="left:1251px;top:407px;width:20px;height:20px;background:#ececf0;"></div>
<svg style="left:1254.8px;top:410.2px;" width="15.4" height="15.4" viewBox="0 0 14.5 14.5"><circle cx="7.25" cy="7.25" r="7.1" fill="#4f6678"/><circle cx="7.1" cy="3.7" r="1.45" fill="#fff"/><path d="M5.2 6.2h3.1v4.6h1.2v1.3H5.1v-1.3h1.2V7.5H5.2z" fill="#fff"/></svg>
<div style="left:393px;top:439.5px;width:400px;height:24.2px;background:linear-gradient(#ebebee 0%,#efeff1 60%,#f5f5f7 100%);border-bottom:1px solid #9f9f9f;"></div>
<div style="left:537px;top:440px;width:1px;height:24px;background:#a6a6a6;"></div>
<div style="left:675px;top:440px;width:1px;height:24px;background:#a6a6a6;"></div>
<div style="left:792px;top:440px;width:1px;height:24px;background:#a6a6a6;"></div>
<span style="left:396.20px;top:444.73px;font:14.5px/14.5px 'Liberation Sans',sans-serif;color:#111;white-space:pre;transform:scaleX(0.9856);transform-origin:0 0;">o_orderkey</span>
<svg style="left:490.9px;top:445.8px;" width="6" height="12.4" viewBox="0 0 6 12.4"><path d="M2.6 0v11" stroke="#111" stroke-width="1.05"/><path d="M0 8.8h5.2L2.6 12.3z" fill="#111"/></svg>
<svg style="left:501.9px;top:446.1px;" width="9.2" height="11.8" viewBox="0 0 9.2 11.8"><path d="M0 0H8.9V3H7.7V2H3.5L6.7 5.8L3.3 9.5H7.9V8.4H9.1V11.7H0V10.2L3.7 5.8L0 1.5Z" fill="#0c0c0c"/></svg>
<svg style="left:514.1px;top:447.6px;" width="11.4" height="8.8" viewBox="0 0 11.4 8.8"><path d="M0.8 0.7h9.7L7 4.4v3.7h-2.7V4.4z" fill="#b4b4b6" stroke="#111" stroke-width="1.2" stroke-linejoin="miter"/></svg>
<svg style="left:527.1px;top:447.8px;" width="9.2" height="7.6" viewBox="0 0 9.2 7.6"><path d="M0 3.5h3" stroke="#111" stroke-width="1.1"/><path d="M3.6 0v7.3" stroke="#111" stroke-width="1.3"/><rect x="4.2" y="1.4" width="4.4" height="3.8" fill="#f4f4f6"/><path d="M4 1.5h4.9M8.5 1.2v4.2" fill="none" stroke="#111" stroke-width="1.1"/><path d="M4 5.2h5.1" stroke="#111" stroke-width="1.6"/></svg>
<span style="left:541.50px;top:444.73px;font:14.5px/14.5px 'Liberation Sans',sans-serif;color:#111;white-space:pre;transform:scaleX(0.9650);transform-origin:0 0;">o_custkey</span>
<svg style="left:628.9px;top:445.8px;" width="6" height="12.4" viewBox="0 0 6 12.4"><path d="M2.6 0v11" stroke="#111" stroke-width="1.05"/><path d="M0 8.8h5.2L2.6 12.3z" fill="#111"/></svg>
<svg style="left:639.9px;top:446.1px;" width="9.2" height="11.8" viewBox="0 0 9.2 11.8"><path d="M0 0H8.9V3H7.7V2H3.5L6.7 5.8L3.3 9.5H7.9V8.4H9.1V11.7H0V10.2L3.7 5.8L0 1.5Z" fill="#0c0c0c"/></svg>
<svg style="left:652.1px;top:447.6px;" width="11.4" height="8.8" viewBox="0 0 11.4 8.8"><path d="M0.8 0.7h9.7L7 4.4v3.7h-2.7V4.4z" fill="#b4b4b6" stroke="#111" stroke-width="1.2" stroke-linejoin="miter"/></svg>
<svg style="left:665.1px;top:447.8px;" width="9.2" height="7.6" viewBox="0 0 9.2 7.6"><path d="M0 3.5h3" stroke="#111" stroke-width="1.1"/><path d="M3.6 0v7.3" stroke="#111" stroke-width="1.3"/><rect x="4.2" y="1.4" width="4.4" height="3.8" fill="#f4f4f6"/><path d="M4 1.5h4.9M8.5 1.2v4.2" fill="none" stroke="#111" stroke-width="1.1"/><path d="M4 5.2h5.1" stroke="#111" stroke-width="1.6"/></svg>
<span style="left:679.50px;top:444.73px;font:14.5px/14.5px 'Liberation Sans',sans-serif;color:#111;white-space:pre;transform:scaleX(0.9783);transform-origin:0 0;">o_orderdate</span>
<svg style="left:770px;top:447.6px;" width="11.4" height="8.8" viewBox="0 0 11.4 8.8"><path d="M0.8 0.7h9.7L7 4.4v3.7h-2.7V4.4z" fill="#b4b4b6" stroke="#111" stroke-width="1.2" stroke-linejoin="miter"/></svg>
<svg style="left:783px;top:447.8px;" width="9.2" height="7.6" viewBox="0 0 9.2 7.6"><path d="M0 3.5h3" stroke="#111" stroke-width="1.1"/><path d="M3.6 0v7.3" stroke="#111" stroke-width="1.3"/><rect x="4.2" y="1.4" width="4.4" height="3.8" fill="#f4f4f6"/><path d="M4 1.5h4.9M8.5 1.2v4.2" fill="none" stroke="#111" stroke-width="1.1"/><path d="M4 5.2h5.1" stroke="#111" stroke-width="1.6"/></svg>
<div style="left:393px;top:484px;width:400px;height:1px;background:repeating-linear-gradient(90deg,#b5b5b5 0 1px,#fff 1px 3px);"></div>
<div style="left:537px;top:464px;width:1px;height:20px;background:repeating-linear-gradient(180deg,#b5b5b5 0 1px,#fff 1px 3px);"></div>
<div style="left:675px;top:464px;width:1px;height:20px;background:repeating-linear-gradient(180deg,#b5b5b5 0 1px,#fff 1px 3px);"></div>
<div style="left:792px;top:464px;width:1px;height:20px;background:repeating-linear-gradient(180deg,#b5b5b5 0 1px,#fff 1px 3px);"></div>
<span style="left:399.40px;top:465.95px;font:14px/14px 'Liberation Sans',sans-serif;color:#111;white-space:pre;transform:scaleX(0.9954);transform-origin:0 0;">1555145351</span>
<span style="left:543.00px;top:465.95px;font:14px/14px 'Liberation Sans',sans-serif;color:#111;white-space:pre;transform:scaleX(1.0061);transform-origin:0 0;">141203122</span>
<span style="left:679.50px;top:465.17px;font:13.5px/13.5px 'Liberation Sans',sans-serif;color:#111;white-space:pre;">1995-01-01 00:...</span>
<svg style="left:9px;top:4.5px;" width="19" height="19" viewBox="0 0 19 19"><circle cx="8.6" cy="9.5" r="6.1" fill="#fbfafb" stroke="#c9c8ca" stroke-width="2.4"/><path d="M2.7 7.2A6.1 6.1 0 0 0 13.4 13.4" fill="none" stroke="#4f9f3c" stroke-width="2.6"/><path d="M4.6 14.2A6.1 6.1 0 0 0 12.6 14.2" fill="none" stroke="#5cb53c" stroke-width="2.6"/><path d="M9.2 2.6C13.8 3.2 16.8 6.8 16.9 14.6L14.9 13.2C14.6 8.6 13.2 5.4 9.2 2.6z" fill="#1a6aa8"/><circle cx="7.6" cy="4.2" r="0.6" fill="#222"/></svg>
</div></body></html>
